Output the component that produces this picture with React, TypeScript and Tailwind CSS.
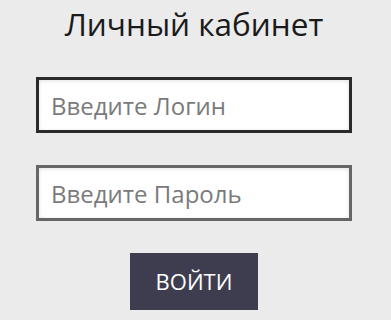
export default function App() {
  return (
    <div
      className="min-h-[320px] w-full bg-[#ebebeb] flex flex-col items-center pr-[3px]"
      style={{ fontFamily: '"Open Sans", sans-serif' }}
    >
      <h1 className="mt-[4px] text-[31.5px] leading-[40px] text-[#1a1a1a]">Личный кабинет</h1>

      <div className="mt-[33px] w-[316px] flex flex-col">
        <input
          type="text"
          placeholder="Введите Логин"
          className="h-[56px] w-full border-[3px] border-[#2a2a2a] bg-white px-[12px] text-[24px] text-[#333] placeholder:text-[#7a7a7a] shadow-[inset_0_1px_4px_rgba(0,0,0,0.12)] outline-none"
        />
        <input
          type="password"
          placeholder="Введите Пароль"
          className="mt-[32px] h-[56px] w-full border-[3px] border-[#666] bg-white px-[12px] text-[24px] text-[#333] placeholder:text-[#7a7a7a] shadow-[inset_0_1px_4px_rgba(0,0,0,0.12)] outline-none"
        />
      </div>

      <button className="mt-[32px] h-[57px] w-[128px] bg-[#3d3d4f] text-[22px] text-white">
        ВОЙТИ
      </button>
    </div>
  );
}
